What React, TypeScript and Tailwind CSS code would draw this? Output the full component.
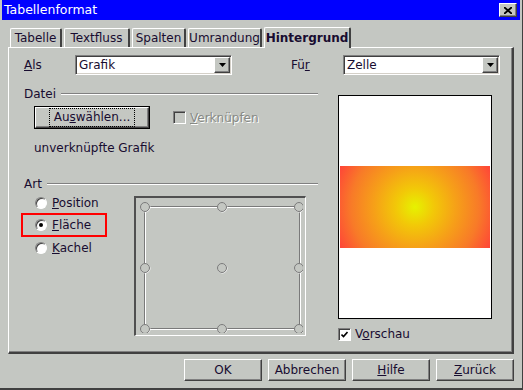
import type React from "react"

const raised =
  "border border-t-white border-l-white border-r-[#404040] border-b-[#404040] shadow-[inset_-1px_-1px_#808080]"
const sunken =
  "border border-t-[#808080] border-l-[#808080] border-r-white border-b-white shadow-[inset_1px_1px_#404040,inset_-1px_-1px_#d4d0c8]"

function U({ children }: { children: React.ReactNode }) {
  return <span className="underline underline-offset-1">{children}</span>
}

function Combo({ value }: { value: string }) {
  return (
    <div className={`w-[157px] h-[20px] bg-white flex items-stretch ${sunken}`}>
      <div className="flex-1 pl-[3px] leading-[18px]">{value}</div>
      <div className={`w-[16px] my-[1px] mr-[1px] bg-[#c4c7c2] flex items-center justify-center ${raised}`}>
        <svg width="7" height="4" viewBox="0 0 7 4">
          <path d="M0 0h7L3.5 4z" fill="#000" />
        </svg>
      </div>
    </div>
  )
}

function GroupTitle({ title }: { title: string }) {
  return (
    <div className="flex items-center h-[14px] leading-[14px]">
      <span>{title}</span>
      <div className="flex-1 ml-[5px] h-[2px] border-t border-t-[#808080] border-b border-b-white" />
    </div>
  )
}

function Radio({ checked }: { checked?: boolean }) {
  return (
    <div className="w-[12px] h-[12px] rounded-full bg-white border border-t-[#808080] border-l-[#808080] border-r-white border-b-white shadow-[inset_1px_1px_#404040] flex items-center justify-center">
      {checked && <div className="w-[4px] h-[4px] rounded-full bg-black" />}
    </div>
  )
}

function Tab({ label, w, active }: { label: string; w: string; active?: boolean }) {
  return (
    <div
      className={`${w} ${
        active ? "h-[21px] -mb-px z-10 font-bold" : "h-[19px]"
      } bg-[#c4c7c2] border-t border-l border-t-white border-l-white border-r-2 border-r-[#404040] rounded-t-[2px] flex items-center justify-center leading-[14px]`}
    >
      {label}
    </div>
  )
}

function PositionGrid() {
  const xs = [9, 86, 163]
  const ys = [9, 70, 131]
  return (
    <div className="w-[172px] h-[140px] border-t-2 border-l-2 border-t-[#505050] border-l-[#505050] border-r border-b border-r-white border-b-white">
      <svg width="169" height="137" viewBox="-2 -2 169 137" className="block -mt-[2px] -ml-[2px]">
        <rect x="9.5" y="9.5" width="155" height="122" fill="none" stroke="#fff" />
        <rect x="8.5" y="8.5" width="155" height="122" fill="none" stroke="#7a7a7a" />
        {ys.map((y) =>
          xs.map((x) => (
            <g key={`${x}-${y}`}>
              <circle cx={x + 0.5} cy={y + 0.5} r="4.5" fill="#c4c7c2" stroke="#fff" />
              <circle cx={x} cy={y} r="4.5" fill="#c4c7c2" stroke="#7a7a7a" />
            </g>
          )),
        )}
      </svg>
    </div>
  )
}

export default function App() {
  return (
    <div className="w-[523px] h-[390px] bg-[#c4c7c2] text-[#180c30] text-[12px] font-['DejaVu_Sans',sans-serif] flex flex-col pl-[2px] pr-[2px] border-r border-r-[#404040] border-b-2 border-b-[#404040] overflow-hidden select-none">
      <div className="h-[20px] bg-[#0000ff] flex items-center justify-between pl-[2px] pr-[3px] text-white">
        <span className="leading-[14px] text-[12.5px]">Tabellenformat</span>
        <div className={`w-[18px] h-[14px] bg-[#c4c7c2] flex items-center justify-center ${raised}`}>
          <svg width="8" height="7" viewBox="0 0 8 7">
            <path d="M0 0l8 7M8 0L0 7" stroke="#000" strokeWidth="1.8" />
          </svg>
        </div>
      </div>

      <div className="ml-[6px] mt-[7px] flex flex-col w-[506px]">
        <div className="flex items-end gap-[2px] pl-[2px] h-[20px]">
          <Tab label="Tabelle" w="w-[52px]" />
          <Tab label="Textfluss" w="w-[66px]" />
          <Tab label="Spalten" w="w-[54px]" />
          <Tab label="Umrandung" w="w-[74px]" />
          <Tab label="Hintergrund" w="w-[87px]" active />
        </div>

        <div className="h-[307px] border-t border-l border-t-white border-l-white border-r-2 border-r-[#404040] border-b-2 border-b-[#404040] shadow-[inset_-1px_-1px_#808080] pl-[15px]">
          <div className="mt-[7px] flex items-center h-[20px]">
            <span className="w-[51px]">
              <U>A</U>ls
            </span>
            <Combo value="Grafik" />
            <span className="ml-[59px] w-[52px]">
              Fü<U>r</U>
            </span>
            <Combo value="Zelle" />
          </div>

          <div className="flex">
            <div className="w-[294px] flex flex-col">
              <div className="mt-[12px]">
                <GroupTitle title="Datei" />
              </div>
              <div className="mt-[5px] ml-[10px] flex items-center">
                <div className="w-[116px] h-[23px] border border-black">
                  <div className={`w-full h-full flex items-center justify-center ${raised}`}>
                    <span className="outline outline-1 outline-dotted outline-black px-[4px] py-[2px] leading-[13px]">
                      Au<U>s</U>wählen...
                    </span>
                  </div>
                </div>
                <div className="ml-[23px] w-[13px] h-[13px] border border-t-[#808080] border-l-[#808080] border-r-white border-b-white shadow-[inset_1px_1px_#404040]" />
                <span className="ml-[4px] text-[#878a85] [text-shadow:1px_1px_0_#fff]">
                  <U>V</U>erknüpfen
                </span>
              </div>
              <div className="mt-[12px] ml-[10px] leading-[14px]">unverknüpfte Grafik</div>

              <div className="mt-[22px]">
                <GroupTitle title="Art" />
              </div>
              <div className="mt-[5px] flex">
                <div className="w-[113px] -ml-[3px] flex flex-col">
                  <div className="h-[14px] pl-[14px] flex items-center gap-[5px]">
                    <Radio />
                    <span>
                      <U>P</U>osition
                    </span>
                  </div>
                  <div className="mt-[3px] w-[86px] h-[24px] border-2 border-[#ff0000] pl-[12px] flex items-center gap-[5px]">
                    <Radio checked />
                    <span>
                      <U>F</U>läche
                    </span>
                  </div>
                  <div className="mt-[4px] h-[14px] pl-[14px] flex items-center gap-[5px]">
                    <Radio />
                    <span>
                      <U>K</U>achel
                    </span>
                  </div>
                </div>
                <PositionGrid />
              </div>
            </div>

            <div className="ml-[20px] flex flex-col">
              <div className="mt-[20px] w-[154px] h-[224px] border border-black bg-white flex items-center justify-center">
                <div className="w-[150px] h-[82px] bg-[radial-gradient(circle_at_center,#e6f200_0%,#f2c808_22%,#f6a018_48%,#f87a28_75%,#ff4438_100%)]" />
              </div>
              <div className="mt-[6px] flex items-center">
                <div className="w-[13px] h-[13px] bg-white border border-t-[#808080] border-l-[#808080] border-r-white border-b-white shadow-[inset_1px_1px_#404040] flex items-center justify-center">
                  <svg width="7" height="7" viewBox="0 0 7 7">
                    <path d="M0.5 3.5l2 2 4-4.5" stroke="#000" strokeWidth="1.6" fill="none" />
                  </svg>
                </div>
                <span className="ml-[4px]">
                  V<U>o</U>rschau
                </span>
              </div>
            </div>
          </div>
        </div>

        <div className="mt-[5px] flex justify-end gap-[6px]">
          {[
            <span key="ok">OK</span>,
            <span key="ab">Abbrechen</span>,
            <span key="hi">
              <U>H</U>ilfe
            </span>,
            <span key="zu">
              <U>Z</U>urück
            </span>,
          ].map((label, i) => (
            <div key={i} className={`w-[78px] h-[22px] flex items-center justify-center ${raised}`}>
              {label}
            </div>
          ))}
        </div>
      </div>
    </div>
  )
}
